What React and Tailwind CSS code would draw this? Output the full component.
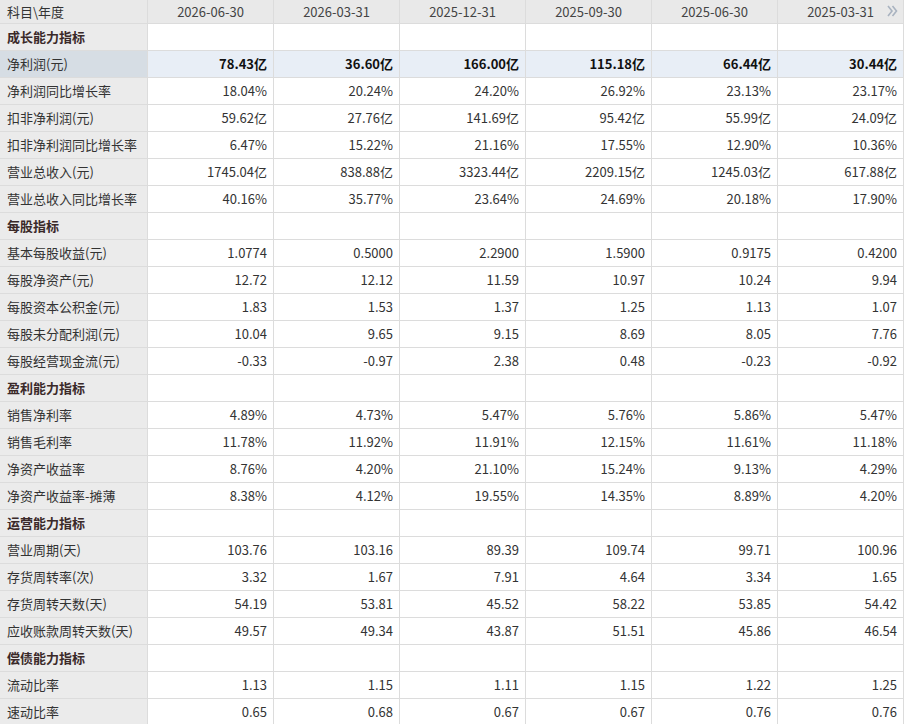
import React from "react";

const dates = ["2026-06-30", "2026-03-31", "2025-12-31", "2025-09-30", "2025-06-30", "2025-03-31"];

const rows = [
  { section: "成长能力指标" },
  { label: "净利润(元)", hl: true, v: ["78.43亿", "36.60亿", "166.00亿", "115.18亿", "66.44亿", "30.44亿"] },
  { label: "净利润同比增长率", v: ["18.04%", "20.24%", "24.20%", "26.92%", "23.13%", "23.17%"] },
  { label: "扣非净利润(元)", v: ["59.62亿", "27.76亿", "141.69亿", "95.42亿", "55.99亿", "24.09亿"] },
  { label: "扣非净利润同比增长率", v: ["6.47%", "15.22%", "21.16%", "17.55%", "12.90%", "10.36%"] },
  { label: "营业总收入(元)", v: ["1745.04亿", "838.88亿", "3323.44亿", "2209.15亿", "1245.03亿", "617.88亿"] },
  { label: "营业总收入同比增长率", v: ["40.16%", "35.77%", "23.64%", "24.69%", "20.18%", "17.90%"] },
  { section: "每股指标" },
  { label: "基本每股收益(元)", v: ["1.0774", "0.5000", "2.2900", "1.5900", "0.9175", "0.4200"] },
  { label: "每股净资产(元)", v: ["12.72", "12.12", "11.59", "10.97", "10.24", "9.94"] },
  { label: "每股资本公积金(元)", v: ["1.83", "1.53", "1.37", "1.25", "1.13", "1.07"] },
  { label: "每股未分配利润(元)", v: ["10.04", "9.65", "9.15", "8.69", "8.05", "7.76"] },
  { label: "每股经营现金流(元)", v: ["-0.33", "-0.97", "2.38", "0.48", "-0.23", "-0.92"] },
  { section: "盈利能力指标" },
  { label: "销售净利率", v: ["4.89%", "4.73%", "5.47%", "5.76%", "5.86%", "5.47%"] },
  { label: "销售毛利率", v: ["11.78%", "11.92%", "11.91%", "12.15%", "11.61%", "11.18%"] },
  { label: "净资产收益率", v: ["8.76%", "4.20%", "21.10%", "15.24%", "9.13%", "4.29%"] },
  { label: "净资产收益率-摊薄", v: ["8.38%", "4.12%", "19.55%", "14.35%", "8.89%", "4.20%"] },
  { section: "运营能力指标" },
  { label: "营业周期(天)", v: ["103.76", "103.16", "89.39", "109.74", "99.71", "100.96"] },
  { label: "存货周转率(次)", v: ["3.32", "1.67", "7.91", "4.64", "3.34", "1.65"] },
  { label: "存货周转天数(天)", v: ["54.19", "53.81", "45.52", "58.22", "53.85", "54.42"] },
  { label: "应收账款周转天数(天)", v: ["49.57", "49.34", "43.87", "51.51", "45.86", "46.54"] },
  { section: "偿债能力指标" },
  { label: "流动比率", v: ["1.13", "1.15", "1.11", "1.15", "1.22", "1.25"] },
  { label: "速动比率", v: ["0.65", "0.68", "0.67", "0.67", "0.76", "0.76"] },
];

const font = { fontFamily: '"Microsoft YaHei", "Noto Sans CJK SC", sans-serif' };

export default function App() {
  return (
    <div className="w-[905px] h-[724px] overflow-hidden bg-white text-[13px] text-[#333]" style={font}>
      <div className="w-[904px]">
        <div className="grid grid-cols-[148px_repeat(6,126px)] h-[24px] bg-[#e9e9e9] border-b border-[#dcdcdc]">
          <div className="pl-[7px] leading-[23px] border-r border-[#dcdcdc]">科目\年度</div>
          {dates.map((d, i) => (
            <div key={d} className="relative text-center leading-[23px] border-r border-[#dcdcdc] text-[#444]">
              {d}
              {i === 5 && (
                <svg className="absolute right-[5px] top-[5px]" width="11" height="12" viewBox="0 0 11 12" fill="none" stroke="#a9b3c0" strokeWidth="1.6">
                  <path d="M1 1 L5 6 L1 11" />
                  <path d="M5.5 1 L9.5 6 L5.5 11" />
                </svg>
              )}
            </div>
          ))}
        </div>
        {rows.map((r, idx) =>
          r.section ? (
            <div key={idx} className="grid grid-cols-[148px_repeat(6,126px)] h-[27px] border-b border-[#dcdcdc]">
              <div className="pl-[7px] leading-[26px] font-bold text-[#3a2929] bg-[#ebebeb] border-r border-[#dcdcdc]">{r.section}</div>
              {dates.map((d) => (
                <div key={d} className="border-r border-[#dcdcdc] bg-white" />
              ))}
            </div>
          ) : (
            <div key={idx} className="grid grid-cols-[148px_repeat(6,126px)] h-[27px] border-b border-[#dcdcdc]">
              <div className={`pl-[7px] leading-[26px] border-r border-[#dcdcdc] ${r.hl ? "bg-[#d6dde4]" : "bg-[#ebebeb]"}`}>{r.label}</div>
              {r.v.map((v, i) => (
                <div
                  key={i}
                  className={`text-right pr-[6px] leading-[26px] border-r border-[#dcdcdc] ${r.hl ? "bg-[#e8eef6] font-bold text-[#111]" : "bg-white"}`}
                >
                  {v}
                </div>
              ))}
            </div>
          )
        )}
      </div>
    </div>
  );
}
